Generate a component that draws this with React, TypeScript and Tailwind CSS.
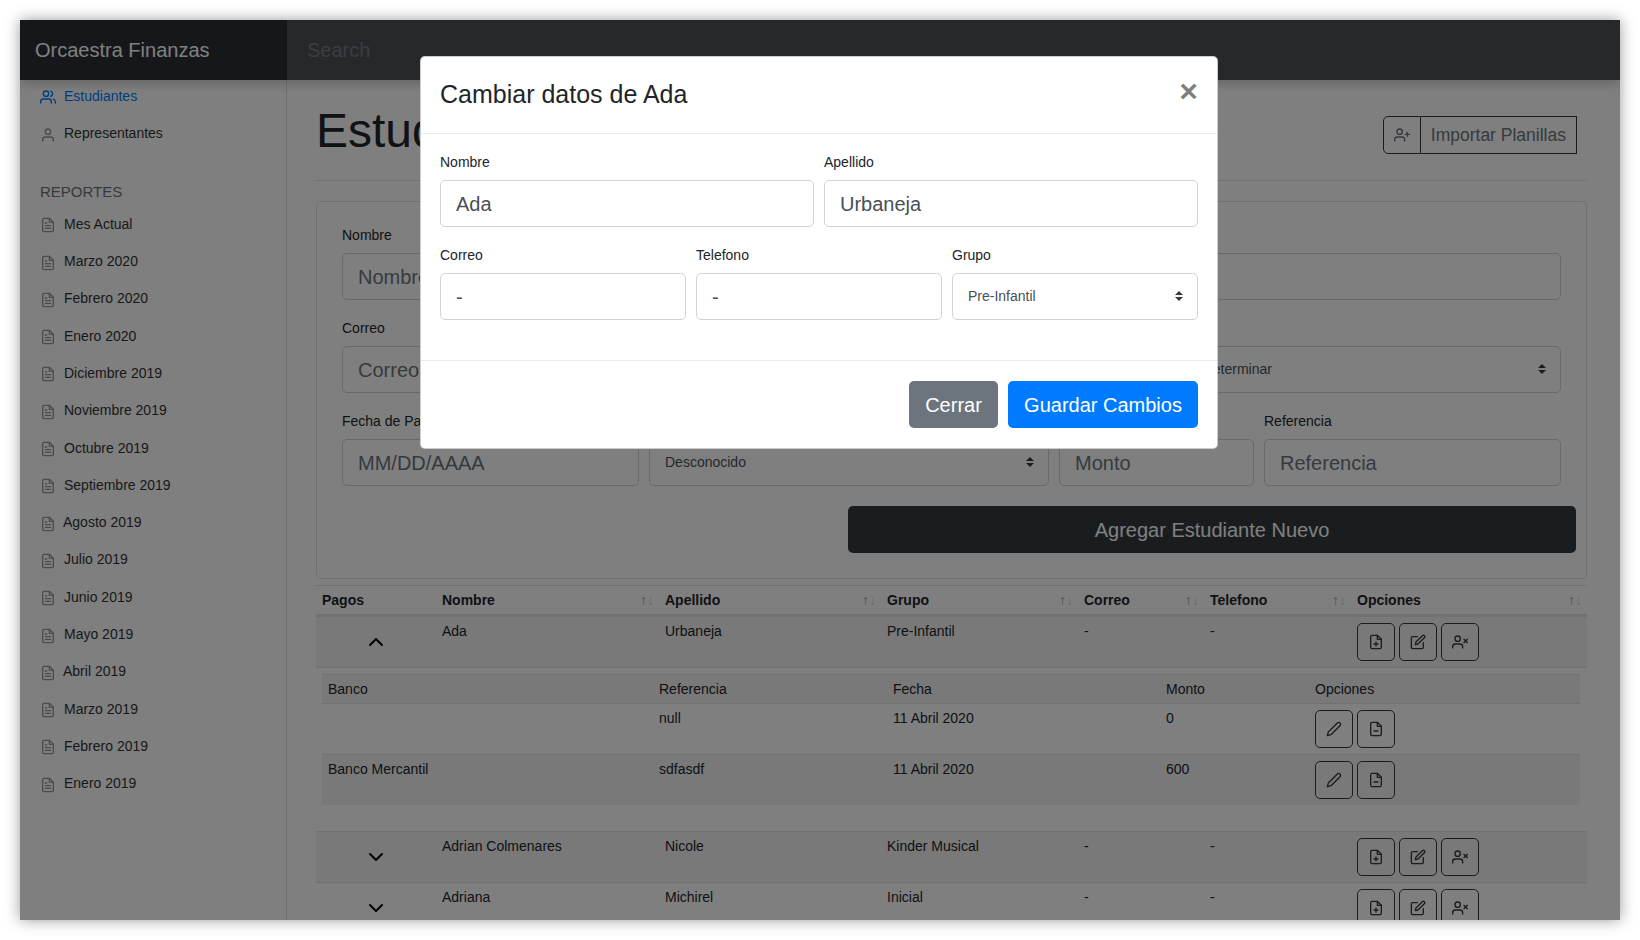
import React from 'react';

const Icon: React.FC<{ size?: number; className?: string; children: React.ReactNode }> = ({ size = 16, className, children }) => (
  <svg width={size} height={size} viewBox="0 0 24 24" fill="none" stroke="currentColor" strokeWidth={2} strokeLinecap="round" strokeLinejoin="round" className={className}>
    {children}
  </svg>
);

const filePath = 'M14 2H6a2 2 0 0 0-2 2v16a2 2 0 0 0 2 2h12a2 2 0 0 0 2-2V8z';

const UsersIcon = ({ className }: { className?: string }) => (
  <Icon className={className}>
    <path d="M17 21v-2a4 4 0 0 0-4-4H5a4 4 0 0 0-4 4v2" />
    <circle cx="9" cy="7" r="4" />
    <path d="M23 21v-2a4 4 0 0 0-3-3.87" />
    <path d="M16 3.13a4 4 0 0 1 0 7.75" />
  </Icon>
);
const UserIcon = ({ className }: { className?: string }) => (
  <Icon className={className}>
    <path d="M20 21v-2a4 4 0 0 0-4-4H8a4 4 0 0 0-4 4v2" />
    <circle cx="12" cy="7" r="4" />
  </Icon>
);
const FileTextIcon = ({ className }: { className?: string }) => (
  <Icon className={className}>
    <path d={filePath} />
    <polyline points="14 2 14 8 20 8" />
    <line x1="16" y1="13" x2="8" y2="13" />
    <line x1="16" y1="17" x2="8" y2="17" />
    <polyline points="10 9 9 9 8 9" />
  </Icon>
);
const FilePlusIcon = () => (
  <Icon>
    <path d={filePath} />
    <polyline points="14 2 14 8 20 8" />
    <line x1="12" y1="18" x2="12" y2="12" />
    <line x1="9" y1="15" x2="15" y2="15" />
  </Icon>
);
const FileMinusIcon = () => (
  <Icon>
    <path d={filePath} />
    <polyline points="14 2 14 8 20 8" />
    <line x1="9" y1="15" x2="15" y2="15" />
  </Icon>
);
const EditIcon = () => (
  <Icon>
    <path d="M11 4H4a2 2 0 0 0-2 2v14a2 2 0 0 0 2 2h14a2 2 0 0 0 2-2v-7" />
    <path d="M18.5 2.5a2.121 2.121 0 0 1 3 3L12 15l-4 1 1-4 9.5-9.5z" />
  </Icon>
);
const Edit2Icon = () => (
  <Icon>
    <path d="M17 3a2.828 2.828 0 1 1 4 4L7.5 20.5 2 22l1.5-5.5L17 3z" />
  </Icon>
);
const UserXIcon = () => (
  <Icon>
    <path d="M16 21v-2a4 4 0 0 0-4-4H5a4 4 0 0 0-4 4v2" />
    <circle cx="8.5" cy="7" r="4" />
    <line x1="18" y1="8" x2="23" y2="13" />
    <line x1="23" y1="8" x2="18" y2="13" />
  </Icon>
);
const UserPlusIcon = () => (
  <Icon>
    <path d="M16 21v-2a4 4 0 0 0-4-4H5a4 4 0 0 0-4 4v2" />
    <circle cx="8.5" cy="7" r="4" />
    <line x1="20" y1="8" x2="20" y2="14" />
    <line x1="23" y1="11" x2="17" y2="11" />
  </Icon>
);
const ChevronUp = () => (
  <Icon size={24}>
    <polyline points="18 15 12 9 6 15" />
  </Icon>
);
const ChevronDown = () => (
  <Icon size={24}>
    <polyline points="6 9 12 15 18 9" />
  </Icon>
);

const reportes = [
  'Mes Actual', 'Marzo 2020', 'Febrero 2020', 'Enero 2020', 'Diciembre 2019', 'Noviembre 2019', 'Octubre 2019', 'Septiembre 2019',
  'Agosto 2019', 'Julio 2019', 'Junio 2019', 'Mayo 2019', 'Abril 2019', 'Marzo 2019', 'Febrero 2019', 'Enero 2019',
];

const Label = ({ children }: { children: React.ReactNode }) => (
  <label className="block text-sm leading-[21px] text-[#212529] mb-[7px]">{children}</label>
);

const Field = ({ label, value, placeholder, className }: { label: string; value?: string; placeholder?: string; className?: string }) => (
  <div className={className}>
    <Label>{label}</Label>
    <input
      readOnly
      value={value}
      placeholder={placeholder}
      className="w-full h-[47px] px-[15px] pt-[2px] text-xl bg-white border border-[#ced4da] rounded-[5px] text-[#495057] placeholder:text-[#6c757d] outline-none"
    />
  </div>
);

const SelectField = ({ label, value, className }: { label: string; value: string; className?: string }) => (
  <div className={className}>
    <Label>{label}</Label>
    <div className="relative">
      <select className="w-full h-[47px] pl-[15px] pb-[2px] text-sm bg-white border border-[#ced4da] rounded-[5px] text-[#495057] appearance-none outline-none">
        <option>{value}</option>
      </select>
      <svg width="8" height="10" viewBox="0 0 4 5" className="absolute right-[15px] top-[18px] text-[#343a40]" fill="currentColor">
        <path d="M2 0L0 2h4zm0 5L0 3h4z" />
      </svg>
    </div>
  </div>
);

const IconButton = ({ children }: { children: React.ReactNode }) => (
  <button className="w-[38px] h-[38px] flex items-center justify-center border border-[#343a40] rounded-[5px] text-[#343a40]">{children}</button>
);

const columns = 'grid grid-cols-[120px_223px_222px_197px_126px_147px_236px]';
const subColumns = 'grid grid-cols-[337px_234px_273px_149px_265px]';

const HeaderCell = ({ children, sort = true }: { children: string; sort?: boolean }) => (
  <div className="flex items-center justify-between pl-[6px] pr-[5px] font-bold">
    <span>{children}</span>
    {sort && (
      <span className="text-sm font-normal text-[#212529] whitespace-nowrap">
        <span className="opacity-45">↑</span>
        <span className="opacity-20">↓</span>
      </span>
    )}
  </div>
);

const StudentRow = ({ nombre, apellido, grupo, open, striped }: { nombre: string; apellido: string; grupo: string; open?: boolean; striped?: boolean }) => (
  <div className={`${columns} h-[51px] border-t border-[#dee2e6] ${striped ? 'bg-black/5' : ''}`}>
    <div className="flex justify-center pt-[13px] text-black">{open ? <ChevronUp /> : <ChevronDown />}</div>
    <div className="px-[6px] pt-1">{nombre}</div>
    <div className="px-[6px] pt-1">{apellido}</div>
    <div className="px-[6px] pt-1">{grupo}</div>
    <div className="px-[6px] pt-1">-</div>
    <div className="px-[6px] pt-1">-</div>
    <div className="flex gap-1 px-[6px] pt-[6px]">
      <IconButton><FilePlusIcon /></IconButton>
      <IconButton><EditIcon /></IconButton>
      <IconButton><UserXIcon /></IconButton>
    </div>
  </div>
);

const PagoRow = ({ banco, referencia, monto, striped }: { banco: string; referencia: string; monto: string; striped?: boolean }) => (
  <div className={`${subColumns} h-[51px] border-t border-[#dee2e6] ${striped ? 'bg-black/5' : ''}`}>
    <div className="px-[6px] pt-1">{banco}</div>
    <div className="pt-1">{referencia}</div>
    <div className="pt-1">11 Abril 2020</div>
    <div className="pt-1">{monto}</div>
    <div className="flex gap-1 pt-[6px]">
      <IconButton><Edit2Icon /></IconButton>
      <IconButton><FileMinusIcon /></IconButton>
    </div>
  </div>
);

export default function App() {
  return (
    <div className="w-full h-[940px] bg-white p-5 overflow-hidden font-['Liberation_Sans',sans-serif]">
      <div className="relative w-[1600px] h-[900px] bg-white overflow-hidden shadow-[0_0_14px_rgba(0,0,0,0.4)] text-sm leading-[21px] text-[#212529]">
        {/* navbar */}
        <div className="flex h-[60px] bg-[#4e5058] shadow-[0_4px_10px_rgba(0,0,0,0.2)] relative">
          <div className="w-[267px] pl-[15px] flex items-center text-xl text-white bg-[#2c2e34]">Orcaestra Finanzas</div>
          <div className="flex-1 pl-5 flex items-center text-xl text-white/25">Search</div>
        </div>

        <div className="flex h-[840px]">
          {/* sidebar */}
          <div className="w-[267px] shrink-0 border-r border-[#e0e0e0]">
            <div className="pl-[20px] text-[#333]">
              <div className="flex items-center h-[37px] -mt-[2px] text-[#007bff]">
                <UsersIcon className="mr-2 mt-[1px]" />
                <span>Estudiantes</span>
              </div>
              <div className="flex items-center h-[37px]">
                <UserIcon className="mr-2 mt-[2px] text-[#999]" />
                <span>Representantes</span>
              </div>
            </div>
            <div className="pl-[20px] mt-[29px] mb-[2.6px] text-[15px] leading-[22px] text-[#6c757d]">REPORTES</div>
            <div className="pl-[20px] text-[#333]">
              {reportes.map((r) => (
                <div key={r} className="flex items-center h-[37.3px]">
                  <FileTextIcon className="mr-2 mt-[2px] text-[#999]" />
                  <span className={r === 'Agosto 2019' || r === 'Abril 2019' ? '-ml-px' : ''}>{r}</span>
                </div>
              ))}
            </div>
          </div>

          {/* main */}
          <div className="flex-1 pl-[29px] pr-[33px]">
            <div className="flex justify-between h-[101px] border-b border-[#dee2e6] pr-[10px]">
              <h1 className="text-[48px] leading-[58px] mt-[22px] text-[#212529]">Estudiantes</h1>
              <div className="flex items-stretch h-[38px] mt-[36px] text-[17.5px] text-[#6c757d]">
                <span className="w-[38px] flex items-center justify-center border border-[#343a40] rounded-l-[5px]"><UserPlusIcon /></span>
                <span className="px-[10px] flex items-center border border-l-0 border-[#343a40]">Importar Planillas</span>
              </div>
            </div>

            <div className="mt-[20px] h-[378px] border border-[#dee2e6] rounded-[5px] pl-[25px] pr-[25px] pt-[23px]">
              <div className="flex gap-[10px] mb-[18px]">
                <Field label="Nombre" placeholder="Nombre" className="flex-1" />
                <Field label="Apellido" placeholder="Apellido" className="flex-1" />
              </div>
              <div className="flex gap-[10px] mb-[18px]">
                <Field label="Correo" placeholder="Correo" className="flex-1" />
                <Field label="Telefono" placeholder="Telefono" className="flex-1" />
                <SelectField label="Grupo" value="Por Determinar" className="w-[400px]" />
              </div>
              <div className="flex gap-[10px]">
                <Field label="Fecha de Pago" placeholder="MM/DD/AAAA" className="w-[297px]" />
                <SelectField label="Banco" value="Desconocido" className="w-[400px]" />
                <Field label="Monto" placeholder="Monto" className="w-[195px]" />
                <Field label="Referencia" placeholder="Referencia" className="w-[297px]" />
              </div>
              <div className="flex justify-end -mr-[15px] mt-[20px]">
                <button className="w-[728px] h-[47px] bg-[#343a40] text-white text-xl rounded-[5px]">Agregar Estudiante Nuevo</button>
              </div>
            </div>

            {/* tabla */}
            <div className="mt-[6px]">
              <div className={`${columns} h-[31px] items-center border-t border-[#dee2e6] border-b-[2px] border-b-[#dee2e6]`}>
                <HeaderCell sort={false}>Pagos</HeaderCell>
                <HeaderCell>Nombre</HeaderCell>
                <HeaderCell>Apellido</HeaderCell>
                <HeaderCell>Grupo</HeaderCell>
                <HeaderCell>Correo</HeaderCell>
                <HeaderCell>Telefono</HeaderCell>
                <HeaderCell>Opciones</HeaderCell>
              </div>
              <StudentRow nombre="Ada" apellido="Urbaneja" grupo="Pre-Infantil" open striped />
              <div className="border-t border-[#dee2e6] pt-[6px] pl-[6px] pr-[7px] h-[164px]">
                <div className={`${subColumns} h-[29px] border-t border-[#dee2e6] bg-black/5`}>
                  <div className="px-[6px] pt-1">Banco</div>
                  <div className="pt-1">Referencia</div>
                  <div className="pt-1">Fecha</div>
                  <div className="pt-1">Monto</div>
                  <div className="pt-1">Opciones</div>
                </div>
                <PagoRow banco="" referencia="null" monto="0" />
                <PagoRow banco="Banco Mercantil" referencia="sdfasdf" monto="600" striped />
              </div>
              <StudentRow nombre="Adrian Colmenares" apellido="Nicole" grupo="Kinder Musical" striped />
              <StudentRow nombre="Adriana" apellido="Michirel" grupo="Inicial" />
            </div>
          </div>
        </div>

        {/* backdrop */}
        <div className="absolute inset-0 bg-black/50" />

        {/* modal */}
        <div className="absolute left-[400px] top-[36px] w-[798px] h-[393px] bg-white border border-black/20 rounded-[5px] flex flex-col">
          <div className="flex items-start justify-between h-[77px] border-b border-[#e9ecef] px-[19px] pt-[19px]">
            <h5 className="text-[25px] leading-9 text-[#212529]">Cambiar datos de Ada</h5>
            <button className="text-[32px] leading-6 font-bold text-black/50 mt-[3px]">×</button>
          </div>
          <div className="flex-1 px-[19px] pt-[18px]">
            <div className="flex gap-[10px] mb-[18px]">
              <Field label="Nombre" value="Ada" className="flex-1" />
              <Field label="Apellido" value="Urbaneja" className="flex-1" />
            </div>
            <div className="flex gap-[10px]">
              <Field label="Correo" value="-" className="flex-1" />
              <Field label="Telefono" value="-" className="flex-1" />
              <SelectField label="Grupo" value="Pre-Infantil" className="flex-1" />
            </div>
          </div>
          <div className="flex justify-end gap-[10px] h-[88px] border-t border-[#e9ecef] px-[19px] pt-[20px]">
            <button className="h-[47px] w-[89px] bg-[#6c757d] text-white text-xl rounded-[5px]">Cerrar</button>
            <button className="h-[47px] w-[190px] bg-[#007bff] text-white text-xl rounded-[5px]">Guardar Cambios</button>
          </div>
        </div>
      </div>
    </div>
  );
}
